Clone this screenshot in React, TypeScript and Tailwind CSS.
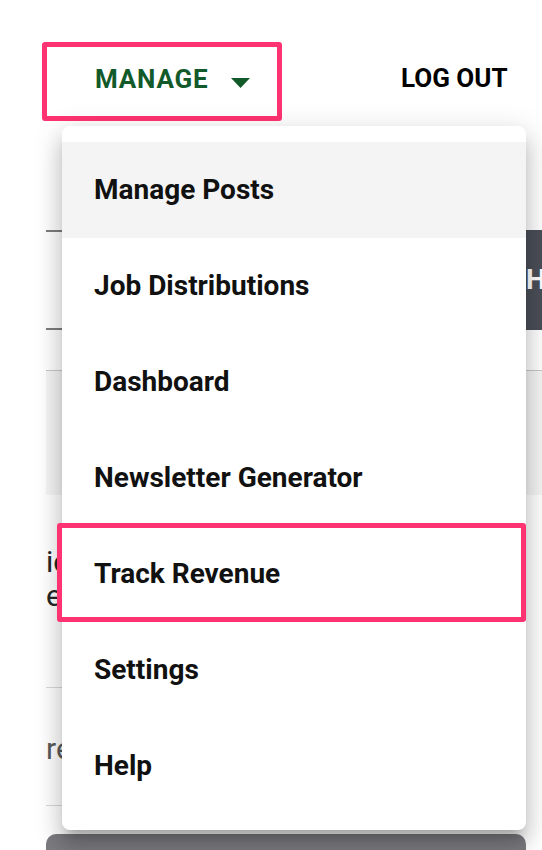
import React from "react";

const items = [
  "Manage Posts",
  "Job Distributions",
  "Dashboard",
  "Newsletter Generator",
  "Track Revenue",
  "Settings",
  "Help",
];

export default function App() {
  return (
    <div className="relative w-[542px] h-[850px] overflow-hidden bg-white font-['Roboto',sans-serif]">
      {/* header */}
      <div className="flex items-start pt-[42px] h-[230px]">
        <div className="ml-[42px] w-[240px] h-[79px] border-[5px] border-[#ff3372] rounded-[3px] flex items-start pt-[17px] pl-[48px]">
          <span className="text-[26px] leading-[30px] font-bold text-[#125a2a] tracking-[0.8px]">MANAGE</span>
          <svg className="ml-[23px] mt-[14px]" width="19" height="10" viewBox="0 0 19 10">
            <polygon points="0,0 19,0 9.5,10" fill="#125a2a" />
          </svg>
        </div>
        <span className="ml-[119px] mt-[21px] text-[26px] leading-[30px] font-bold text-black">LOG OUT</span>
      </div>

      {/* background page content */}
      <div className="ml-[46px] w-[496px] flex flex-col">
        <div className="h-[100px] border-y-2 border-[#7d7d7d] flex justify-end">
          <div className="-my-[2px] h-[100px] w-[36px] pl-[20px] bg-[#4b4f58] flex items-center overflow-hidden">
            <span className="text-[28px] font-bold text-white leading-none">H</span>
          </div>
        </div>
        <div className="h-[40px]" />
        <div className="h-[125px] border-t border-[#c8c8c8] bg-[#f5f5f5]" />
        <div className="w-[480px] h-[193px] pt-[50px] border-b border-[#d9d9d9] text-[30px] leading-[34px] text-[#262626]">
          <div>ic</div>
          <div>e</div>
        </div>
        <div className="w-[480px] h-[118px] pt-[44px] border-b border-[#d9d9d9] text-[30px] leading-[34px] text-[#5a5a5a]">
          <div>re</div>
        </div>
        <div className="h-[28px]" />
        <div className="w-[480px] h-[40px] bg-[#7b7b80] rounded-t-[10px]" />
      </div>

      {/* dropdown menu */}
      <div className="absolute left-[62px] top-[126px] w-[464px] rounded-[8px] bg-white py-[16px] shadow-[0_10px_10px_-6px_rgba(0,0,0,0.2),0_16px_20px_2px_rgba(0,0,0,0.14),0_6px_28px_4px_rgba(0,0,0,0.12)]">
        {items.map((t, i) => (
          <div
            key={t}
            className={
              "h-[96px] flex items-center pl-[32px] text-[28px] font-bold text-[#111] " +
              (i === 0 ? "bg-[#f4f4f4]" : "")
            }
          >
            {t}
          </div>
        ))}
      </div>

      {/* highlight box */}
      <div className="absolute left-[57px] top-[523px] w-[469px] h-[99px] border-[5px] border-[#ff3372] rounded-[3px]" />
    </div>
  );
}
